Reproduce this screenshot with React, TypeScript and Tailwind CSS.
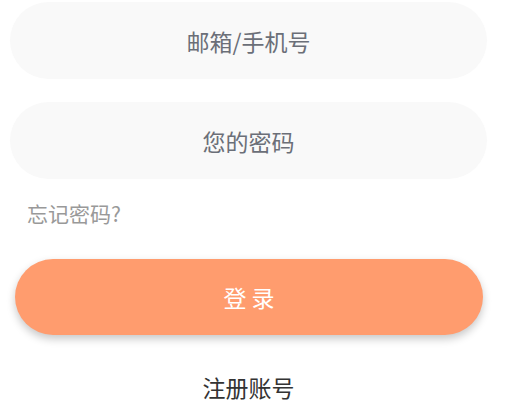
export default function App() {
  return (
    <div
      className="w-[507px] h-[410px] bg-white overflow-hidden flex flex-col"
      style={{ fontFamily: '"Noto Sans CJK SC", "Noto Sans", sans-serif' }}
    >
      <input
        type="text"
        placeholder="邮箱/手机号"
        className="mt-[2px] ml-[10px] w-[477px] h-[77px] rounded-full bg-[#f9f9f9] text-center text-[23px] text-[#333] placeholder:text-[#6b6f78] outline-none"
      />
      <input
        type="password"
        placeholder="您的密码"
        className="mt-[23px] ml-[10px] w-[477px] h-[77px] rounded-full bg-[#f9f9f9] text-center text-[23px] text-[#333] placeholder:text-[#6b6f78] outline-none"
      />
      <a className="mt-[20px] ml-[27px] w-fit text-[21px] leading-[28px] text-[#999]">忘记密码?</a>
      <button className="mt-[32px] ml-[15px] w-[468px] h-[76px] rounded-full bg-[#ff9c6e] text-white text-[23px] shadow-[0_4px_8px_rgba(0,0,0,0.22)]">
        登 录
      </button>
      <div className="mt-[37px] w-[497px] text-center text-[23px] leading-[30px] text-[#333]">注册账号</div>
    </div>
  )
}
